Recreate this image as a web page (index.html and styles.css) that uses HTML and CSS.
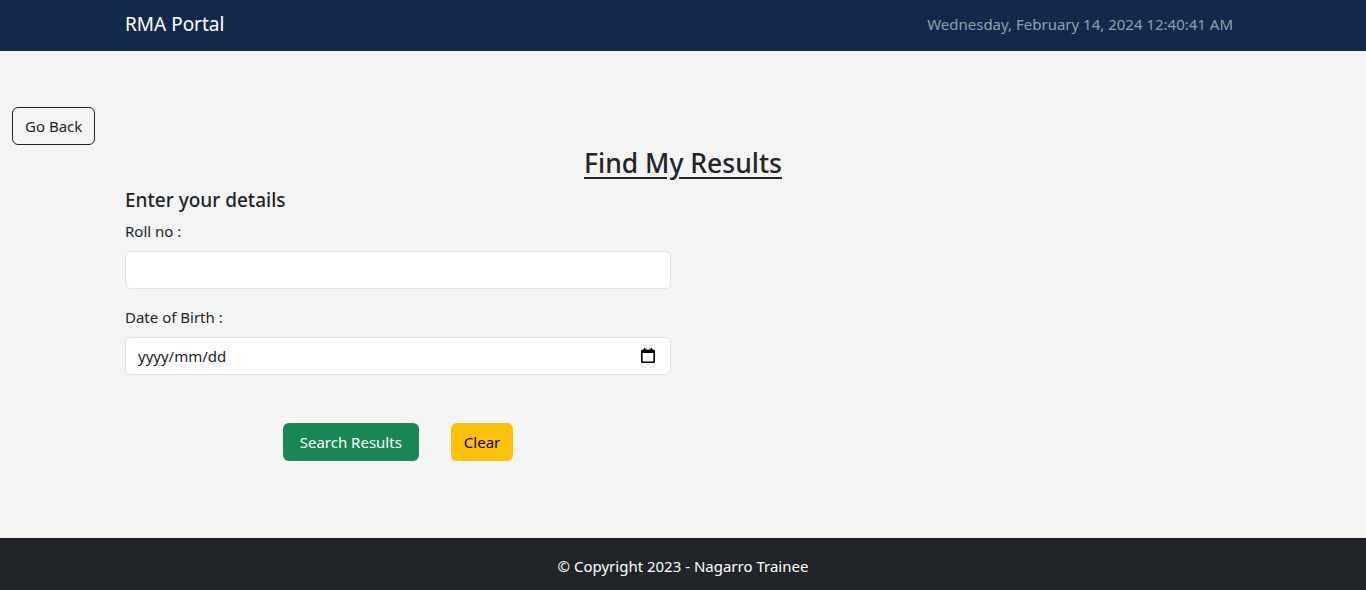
FILE: index.html
```html
<!DOCTYPE html>
<html lang="en">
<head>
<meta charset="utf-8">
<title>RMA Portal</title>
<link rel="stylesheet" href="styles.css">
</head>
<body>
<header class="topbar">
  <div class="topbar-inner">
    <span class="brand">RMA Portal</span>
    <span class="clock">Wednesday, February 14, 2024 12:40:41 AM</span>
  </div>
</header>
<main class="page">
  <button class="btn-back" type="button">Go Back</button>
  <h3 class="title">Find My Results</h3>
  <div class="container">
    <form class="form">
      <h5 class="form-heading">Enter your details</h5>
      <label class="form-label" for="roll">Roll no :</label>
      <input class="form-control" id="roll" type="text">
      <label class="form-label label-gap" for="dob">Date of Birth :</label>
      <div class="form-control date-control" id="dob">
        <span class="date-text">yyyy/mm/dd</span>
        <svg class="cal-icon" width="14" height="15" viewBox="0 0 14 15" aria-hidden="true">
          <rect x="0" y="1.5" width="14" height="13.5" rx="1.5" fill="#000"/>
          <rect x="1.6" y="5" width="10.8" height="8.4" fill="#fff"/>
          <rect x="3" y="0" width="1.6" height="3" fill="#000"/>
          <rect x="9.4" y="0" width="1.6" height="3" fill="#000"/>
        </svg>
      </div>
      <div class="actions">
        <button class="btn btn-success" type="button">Search Results</button>
        <button class="btn btn-warning" type="button">Clear</button>
      </div>
    </form>
  </div>
</main>
<footer class="footer">© Copyright 2023 - Nagarro Trainee</footer>
</body>
</html>
```

FILE: styles.css
```css
* { box-sizing: border-box; }
html, body { height: 100%; }
body {
  margin: 0;
  font-family: "Noto Sans", "Open Sans", sans-serif;
  font-size: 15px;
  line-height: 1.5;
  color: #212529;
  background: #f4f4f4;
  display: flex;
  flex-direction: column;
}
.topbar {
  background: #13294b;
  height: 51px;
  flex: none;
}
.topbar-inner {
  width: 1116px;
  margin: 0 auto;
  height: 100%;
  display: flex;
  align-items: center;
  justify-content: space-between;
  padding-right: 8px;
  padding-bottom: 2px;
}
.brand {
  color: #fff;
  font-size: 19px;
}
.clock {
  color: rgba(255, 255, 255, 0.55);
  font-size: 15px;
}
.page {
  flex: 1;
  padding-top: 56px;
}
.btn-back {
  margin-left: 12px;
  height: 38px;
  padding: 0 12px;
  font: inherit;
  color: #212529;
  background: transparent;
  border: 1px solid #212529;
  border-radius: 6px;
}
.title {
  margin: 3px 0 8px;
  font-size: 26.5px;
  font-weight: 500;
  line-height: 1.2;
  text-align: center;
  text-decoration: underline;
  text-underline-offset: 4px;
}
.container {
  width: 1116px;
  margin: 0 auto;
}
.form {
  width: 546px;
  display: flex;
  flex-direction: column;
}
.form-heading {
  margin: 0 0 7px;
  font-size: 19px;
  font-weight: 500;
  line-height: 24px;
}
.form-label {
  font-size: 15px;
  line-height: 24px;
  margin-bottom: 8px;
}
.label-gap { margin-top: 16px; }
.form-control {
  height: 38px;
  width: 100%;
  padding: 6px 12px;
  font: inherit;
  background: #fff;
  border: 1px solid #dee2e6;
  border-radius: 6px;
}
.date-control {
  display: flex;
  align-items: center;
  justify-content: space-between;
  padding-right: 15px;
}
.date-text { color: #212529; }
.cal-icon { display: block; }
.actions {
  margin-top: 48px;
  display: flex;
  justify-content: center;
  gap: 32px;
}
.btn {
  height: 38px;
  padding: 0 12px;
  font: inherit;
  border: 1px solid transparent;
  border-radius: 6px;
}
.btn-success { background: #198754; color: #fff; padding: 0 16px; }
.btn-warning { background: #ffc107; color: #000; }
.footer {
  flex: none;
  height: 52px;
  padding-top: 4px;
  background: #212529;
  color: #fff;
  display: flex;
  align-items: center;
  justify-content: center;
}
```
